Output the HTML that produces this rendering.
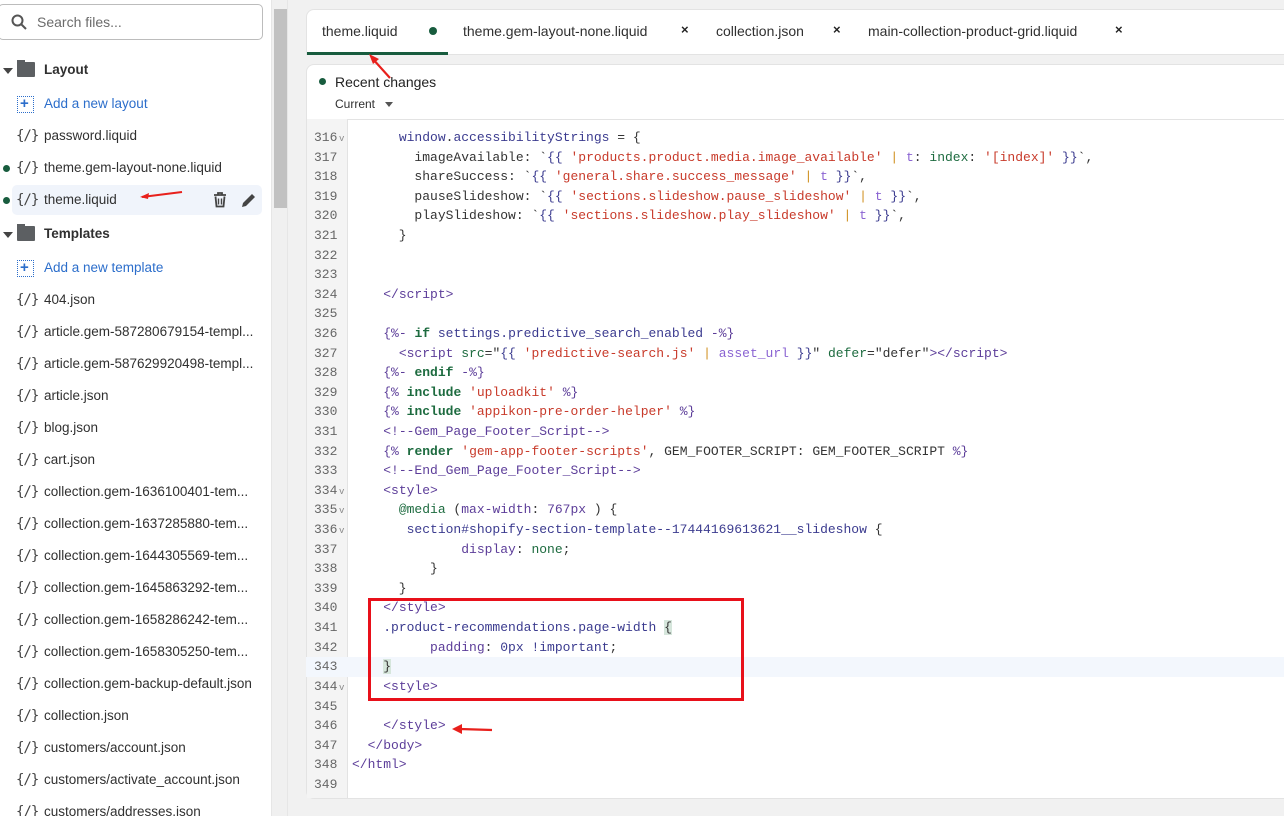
<!DOCTYPE html>
<html style="overflow:hidden;height:816px"><head><meta charset="utf-8"><style>
*{box-sizing:border-box;margin:0;padding:0}
body{width:1284px;height:816px;overflow:hidden;background:#f1f1f1;font-family:"Liberation Sans",sans-serif;position:relative;color:#303030}
#side{position:absolute;left:0;top:0;width:271px;height:816px;background:#fff}
#sb{position:absolute;left:271px;top:0;width:17px;height:816px;background:#f0f0f0;border-left:1px solid #e6e6e6;border-right:1px solid #e6e6e6}
#thumb{position:absolute;left:2px;top:9px;width:13px;height:199px;background:#c1c1c1}
.search{position:absolute;left:-2px;top:4px;width:265px;height:36px;border:1px solid #bcbcbc;border-radius:5px}
.search span{position:absolute;left:38px;top:9px;font-size:14px;color:#6b6b6b}
.it{position:absolute;left:0;height:30px;width:262px;font-size:13.5px;line-height:30px;white-space:nowrap}
.it .ic{position:absolute;left:16px;top:0;font-family:"DejaVu Sans Mono",monospace;font-size:14px;color:#444;letter-spacing:-1px}
.it .t{position:absolute;left:44px}
.it.sel{background:#f0f4fb;border-radius:5px;left:12px;width:250px}
.it.sel .ic{left:4px}.it.sel .t{left:32px}
.dot{position:absolute;left:3px;top:12px;width:7px;height:7px;border-radius:50%;background:#185c3e}
.fold{font-weight:bold;color:#303030}
.add{color:#2c6ecb}
.addic{position:absolute;left:17px;top:7px;width:17px;height:17px;border:1.5px dotted #2c6ecb}
.addic:after{content:"+";position:absolute;left:2px;top:-8px;font-size:15px;color:#2c6ecb;font-weight:bold}
.tri{position:absolute;left:3px;top:13px;border-left:5px solid transparent;border-right:5px solid transparent;border-top:6px solid #444}
.fol{position:absolute;left:17px;top:7px;width:18px;height:15px;background:#5c5f62;border-radius:1px}
.fol:before{content:"";position:absolute;left:0;top:-2px;width:8px;height:3px;background:#5c5f62}
#tabs{position:absolute;left:306px;top:9px;width:978px;height:46px;background:#fff;border:1px solid #e3e3e3;border-radius:8px 0 0 0;border-right:none}
.tab{position:absolute;top:13px;font-size:14px;color:#303030}
.x{position:absolute;top:12px;font-size:13px;font-weight:bold;color:#222}
#ed{position:absolute;left:306px;top:64px;width:978px;height:735px;background:#fff;border:1px solid #e3e3e3;border-right:none;border-radius:8px 0 0 8px}
#gut{position:absolute;left:0;top:54px;width:41px;bottom:0;background:#f4f4f4;border-right:1px solid #e3e3e3}
.ln{position:absolute;left:0;width:978px;height:19.6px;font-family:"Liberation Mono",monospace;font-size:13px;line-height:19.6px;white-space:pre;color:#333}
.ln .n{position:absolute;left:8px;color:#666}
.ln .c{position:absolute;left:46px}
.ln .f{position:absolute;left:33px;top:2px;font-size:9px;color:#888}
.hl{background:#f3f7fd}
.tg{color:#5c3d99}.s{color:#c83a2a}.k{color:#1d6b3f;font-weight:bold}.p{color:#d09020}.v{color:#8a63d2}.g{color:#1d6b3f}.b{color:#3b3b8f}.nm{color:#5c3d99}
</style></head><body>
<div id="side">
<div class="search"><svg style="position:absolute;left:12px;top:9px" width="16" height="16" viewBox="0 0 16 16"><circle cx="6.5" cy="6.5" r="5" stroke="#555" stroke-width="2" fill="none"/><line x1="10" y1="10" x2="15" y2="15" stroke="#555" stroke-width="2"/></svg><span>Search files...</span></div>
<div class="it" style="top:55px"><div class="tri"></div><div class="fol"></div><span class="t fold">Layout</span></div>
<div class="it" style="top:89px"><div class="addic"></div><span class="t add">Add a new layout</span></div>
<div class="it" style="top:121px"><span class="ic">{/}</span><span class="t">password.liquid</span></div>
<div class="it" style="top:153px"><div class="dot"></div><span class="ic">{/}</span><span class="t">theme.gem-layout-none.liquid</span></div>
<div class="dot" style="top:197px;position:absolute"></div>
<div class="it sel" style="top:185px"><span class="ic">{/}</span><span class="t">theme.liquid</span>
<svg style="position:absolute;left:200px;top:7px" width="16" height="16" viewBox="0 0 16 16"><path d="M2 3h12M6 3V1h4v2M3.5 4.5l1 10h7l1-10" stroke="#444" stroke-width="1.8" fill="none"/><path d="M6.5 6.5v6M9.5 6.5v6" stroke="#444" stroke-width="1.4"/></svg>
<svg style="position:absolute;left:228px;top:7px" width="17" height="17" viewBox="0 0 17 17"><path d="M2 15l1-4 9-9 3 3-9 9z" fill="#444"/></svg>
<svg style="position:absolute;left:128px;top:4px" width="44" height="12" viewBox="0 0 44 12"><path d="M2 8L42 3" stroke="#e8201c" stroke-width="2"/><path d="M0 8l9-4 -1 6z" fill="#e8201c"/></svg></div>
<div class="it" style="top:219px"><div class="tri"></div><div class="fol"></div><span class="t fold">Templates</span></div>
<div class="it" style="top:253px"><div class="addic"></div><span class="t add">Add a new template</span></div>
<div class="it" style="top:285px"><span class="ic">{/}</span><span class="t">404.json</span></div>
<div class="it" style="top:317px"><span class="ic">{/}</span><span class="t">article.gem-587280679154-templ...</span></div>
<div class="it" style="top:349px"><span class="ic">{/}</span><span class="t">article.gem-587629920498-templ...</span></div>
<div class="it" style="top:381px"><span class="ic">{/}</span><span class="t">article.json</span></div>
<div class="it" style="top:413px"><span class="ic">{/}</span><span class="t">blog.json</span></div>
<div class="it" style="top:445px"><span class="ic">{/}</span><span class="t">cart.json</span></div>
<div class="it" style="top:477px"><span class="ic">{/}</span><span class="t">collection.gem-1636100401-tem...</span></div>
<div class="it" style="top:509px"><span class="ic">{/}</span><span class="t">collection.gem-1637285880-tem...</span></div>
<div class="it" style="top:541px"><span class="ic">{/}</span><span class="t">collection.gem-1644305569-tem...</span></div>
<div class="it" style="top:573px"><span class="ic">{/}</span><span class="t">collection.gem-1645863292-tem...</span></div>
<div class="it" style="top:605px"><span class="ic">{/}</span><span class="t">collection.gem-1658286242-tem...</span></div>
<div class="it" style="top:637px"><span class="ic">{/}</span><span class="t">collection.gem-1658305250-tem...</span></div>
<div class="it" style="top:669px"><span class="ic">{/}</span><span class="t">collection.gem-backup-default.json</span></div>
<div class="it" style="top:701px"><span class="ic">{/}</span><span class="t">collection.json</span></div>
<div class="it" style="top:733px"><span class="ic">{/}</span><span class="t">customers/account.json</span></div>
<div class="it" style="top:765px"><span class="ic">{/}</span><span class="t">customers/activate_account.json</span></div>
<div class="it" style="top:797px"><span class="ic">{/}</span><span class="t">customers/addresses.json</span></div>
</div>
<div id="sb"><div id="thumb"></div></div>

<div id="tabs">
<span class="tab" style="left:15px">theme.liquid</span>
<div style="position:absolute;left:0;top:42px;width:141px;height:3px;background:#185c3e"></div>
<div style="position:absolute;left:122px;top:17px;width:8px;height:8px;border-radius:50%;background:#185c3e"></div>
<span class="tab" style="left:156px">theme.gem-layout-none.liquid</span><span class="x" style="left:374px">×</span>
<span class="tab" style="left:409px">collection.json</span><span class="x" style="left:526px">×</span>
<span class="tab" style="left:561px">main-collection-product-grid.liquid</span><span class="x" style="left:808px">×</span>
</div>

<div id="ed">
<div style="position:absolute;left:12px;top:13px;width:7px;height:7px;border-radius:50%;background:#185c3e"></div>
<span style="position:absolute;left:28px;top:9px;font-size:14px;color:#222">Recent changes</span>
<span style="position:absolute;left:28px;top:32px;font-size:12px;color:#303030">Current</span>
<div style="position:absolute;left:78px;top:37px;border-left:4px solid transparent;border-right:4px solid transparent;border-top:5px solid #555"></div>
<div style="position:absolute;left:0;top:54px;width:978px;border-top:1px solid #e3e3e3"></div>
<div id="gut"></div>
</div>
<svg style="position:absolute;left:366px;top:52px" width="30" height="30" viewBox="0 0 30 30"><path d="M24 26L6 6" stroke="#e8201c" stroke-width="2.2"/><path d="M3 2l10 5-6 5z" fill="#e8201c"/></svg>
<div id="code" style="position:absolute;left:306px;top:0">
<div class="ln" style="top:128px"><span class="n">316</span><span class="f">v</span><span class="c">      <span class="b">window</span>.<span class="b">accessibilityStrings</span> = {</span></div>
<div class="ln" style="top:148px"><span class="n">317</span><span class="c">        imageAvailable: `<span class="b">{{</span> <span class="s">'products.product.media.image_available'</span> <span class="p">|</span> <span class="v">t</span>: <span class="g">index</span>: <span class="s">'[index]'</span> <span class="b">}}</span>`,</span></div>
<div class="ln" style="top:167px"><span class="n">318</span><span class="c">        shareSuccess: `<span class="b">{{</span> <span class="s">'general.share.success_message'</span> <span class="p">|</span> <span class="v">t</span> <span class="b">}}</span>`,</span></div>
<div class="ln" style="top:187px"><span class="n">319</span><span class="c">        pauseSlideshow: `<span class="b">{{</span> <span class="s">'sections.slideshow.pause_slideshow'</span> <span class="p">|</span> <span class="v">t</span> <span class="b">}}</span>`,</span></div>
<div class="ln" style="top:206px"><span class="n">320</span><span class="c">        playSlideshow: `<span class="b">{{</span> <span class="s">'sections.slideshow.play_slideshow'</span> <span class="p">|</span> <span class="v">t</span> <span class="b">}}</span>`,</span></div>
<div class="ln" style="top:226px"><span class="n">321</span><span class="c">      }</span></div>
<div class="ln" style="top:246px"><span class="n">322</span></div>
<div class="ln" style="top:265px"><span class="n">323</span></div>
<div class="ln" style="top:285px"><span class="n">324</span><span class="c">    <span class="tg">&lt;/script&gt;</span></span></div>
<div class="ln" style="top:304px"><span class="n">325</span></div>
<div class="ln" style="top:324px"><span class="n">326</span><span class="c">    <span class="tg">{%-</span> <span class="k">if</span> <span class="b">settings.predictive_search_enabled</span> <span class="tg">-%}</span></span></div>
<div class="ln" style="top:344px"><span class="n">327</span><span class="c">      <span class="tg">&lt;script</span> <span class="g">src</span>="<span class="b">{{</span> <span class="s">'predictive-search.js'</span> <span class="p">|</span> <span class="v">asset_url</span> <span class="b">}}</span>" <span class="g">defer</span>="defer"<span class="tg">&gt;&lt;/script&gt;</span></span></div>
<div class="ln" style="top:363px"><span class="n">328</span><span class="c">    <span class="tg">{%-</span> <span class="k">endif</span> <span class="tg">-%}</span></span></div>
<div class="ln" style="top:383px"><span class="n">329</span><span class="c">    <span class="tg">{%</span> <span class="k">include</span> <span class="s">'uploadkit'</span> <span class="tg">%}</span></span></div>
<div class="ln" style="top:402px"><span class="n">330</span><span class="c">    <span class="tg">{%</span> <span class="k">include</span> <span class="s">'appikon-pre-order-helper'</span> <span class="tg">%}</span></span></div>
<div class="ln" style="top:422px"><span class="n">331</span><span class="c">    <span class="tg">&lt;!--Gem_Page_Footer_Script--&gt;</span></span></div>
<div class="ln" style="top:442px"><span class="n">332</span><span class="c">    <span class="tg">{%</span> <span class="k">render</span> <span class="s">'gem-app-footer-scripts'</span>, GEM_FOOTER_SCRIPT: GEM_FOOTER_SCRIPT <span class="tg">%}</span></span></div>
<div class="ln" style="top:461px"><span class="n">333</span><span class="c">    <span class="tg">&lt;!--End_Gem_Page_Footer_Script--&gt;</span></span></div>
<div class="ln" style="top:481px"><span class="n">334</span><span class="f">v</span><span class="c">    <span class="tg">&lt;style&gt;</span></span></div>
<div class="ln" style="top:500px"><span class="n">335</span><span class="f">v</span><span class="c">      <span class="g">@media</span> (<span class="tg">max-width</span>: <span class="tg">767px</span> ) {</span></div>
<div class="ln" style="top:520px"><span class="n">336</span><span class="f">v</span><span class="c">       <span class="b">section#shopify-section-template--17444169613621__slideshow</span> {</span></div>
<div class="ln" style="top:540px"><span class="n">337</span><span class="c">              <span class="tg">display</span>: <span class="g">none</span>;</span></div>
<div class="ln" style="top:559px"><span class="n">338</span><span class="c">          }</span></div>
<div class="ln" style="top:579px"><span class="n">339</span><span class="c">      }</span></div>
<div class="ln" style="top:598px"><span class="n">340</span><span class="c">    <span class="tg">&lt;/style&gt;</span></span></div>
<div class="ln" style="top:618px"><span class="n">341</span><span class="c">    <span class="b">.product-recommendations.page-width</span> <span style="background:#d6e6dc">{</span></span></div>
<div class="ln" style="top:638px"><span class="n">342</span><span class="c">          <span class="tg">padding</span>: <span class="b">0px !important</span>;</span></div>
<div class="ln hl" style="top:657px;left:0"><span class="n">343</span><span class="c">    <span style="background:#d6e6dc">}</span></span></div>
<div class="ln" style="top:677px"><span class="n">344</span><span class="f">v</span><span class="c">    <span class="tg">&lt;style&gt;</span></span></div>
<div class="ln" style="top:697px"><span class="n">345</span></div>
<div class="ln" style="top:716px"><span class="n">346</span><span class="c">    <span class="tg">&lt;/style&gt;</span></span></div>
<div class="ln" style="top:736px"><span class="n">347</span><span class="c">  <span class="tg">&lt;/body&gt;</span></span></div>
<div class="ln" style="top:755px"><span class="n">348</span><span class="c"><span class="tg">&lt;/html&gt;</span></span></div>
<div class="ln" style="top:775px"><span class="n">349</span></div>
</div>
<div style="position:absolute;left:368px;top:598px;width:376px;height:103px;border:3px solid #e8101a"></div>
<svg style="position:absolute;left:452px;top:723px" width="42" height="12" viewBox="0 0 42 12"><path d="M8 6L40 7" stroke="#e8201c" stroke-width="2.2"/><path d="M0 6l10-5v10z" fill="#e8201c"/></svg>
</body></html>
